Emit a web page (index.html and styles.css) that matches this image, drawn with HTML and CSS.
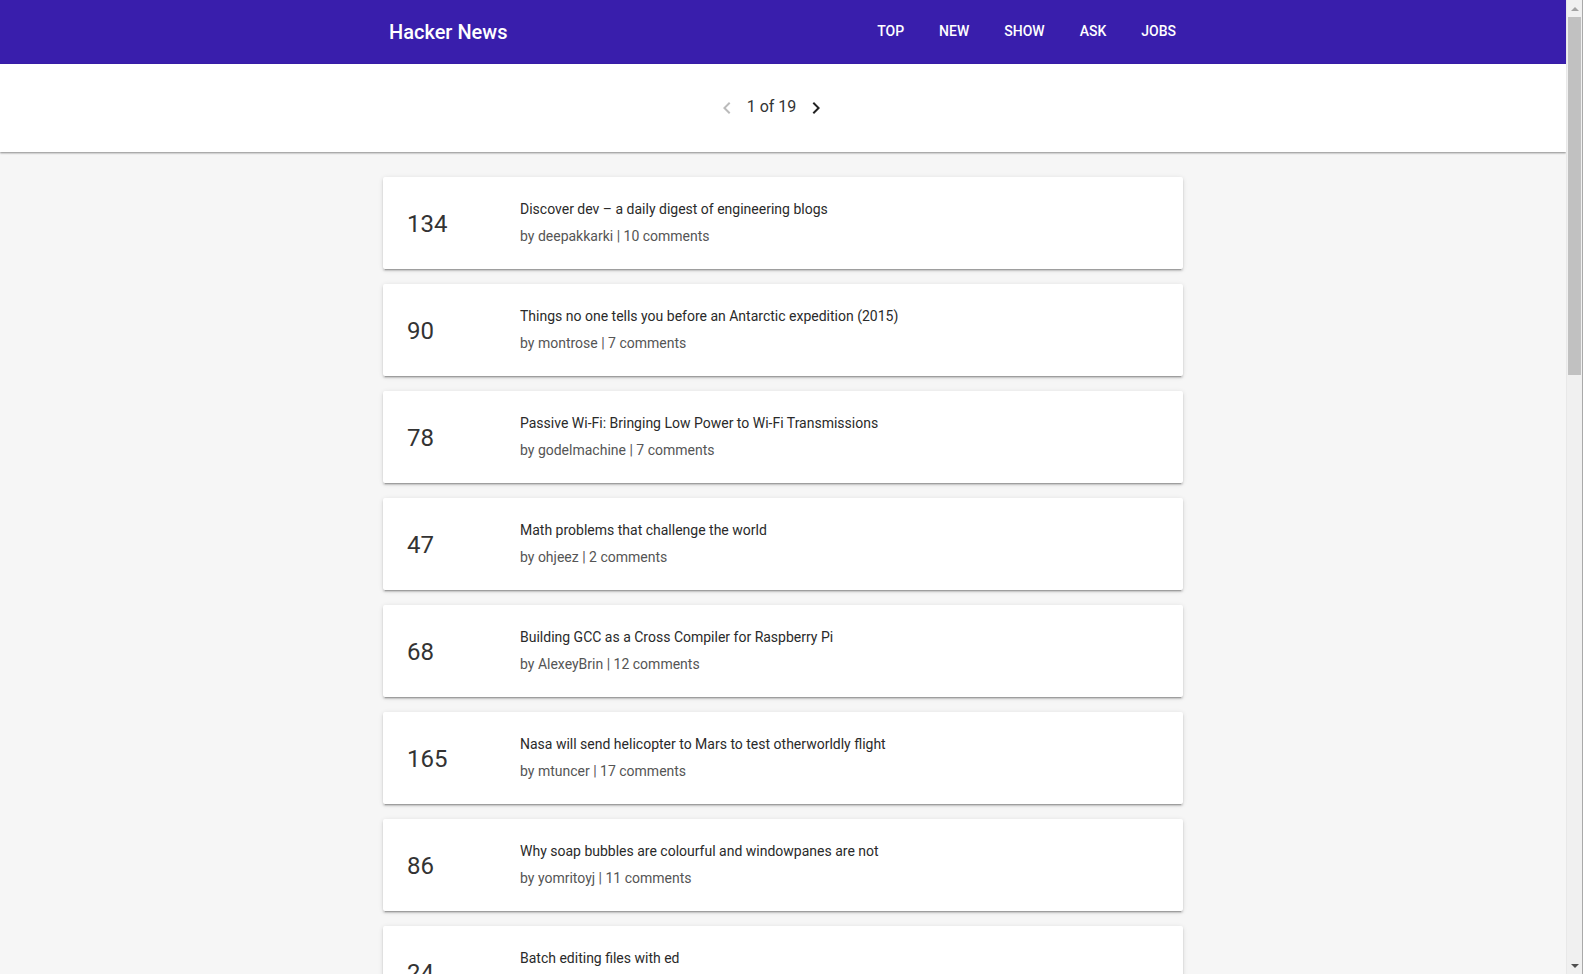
FILE: index.html
```html
<!DOCTYPE html>
<html lang="en">
<head>
<meta charset="utf-8">
<title>Hacker News</title>
<link rel="stylesheet" href="styles.css">
</head>
<body>
<header class="topbar">
  <div class="container topbar-inner">
    <a class="brand" href="#">Hacker News</a>
    <nav class="nav">
      <a href="#">Top</a>
      <a href="#">New</a>
      <a href="#">Show</a>
      <a href="#">Ask</a>
      <a href="#">Jobs</a>
    </nav>
  </div>
</header>
<div class="pager">
  <div class="pager-inner">
    <span class="pager-btn disabled"><svg viewBox="0 0 24 24" width="24" height="24"><path d="M15.41 7.41L14 6l-6 6 6 6 1.41-1.41L10.83 12z"/></svg></span>
    <span class="pager-text">1 of 19</span>
    <span class="pager-btn"><svg viewBox="0 0 24 24" width="24" height="24"><path d="M8.59 16.59L10 18l6-6-6-6-1.41 1.41L13.17 12z"/></svg></span>
  </div>
</div>
<main class="container list">
  <div class="card"><div class="score">134</div><div class="info"><div class="title">Discover dev – a daily digest of engineering blogs</div><div class="meta">by deepakkarki | 10 comments</div></div></div>
  <div class="card"><div class="score">90</div><div class="info"><div class="title">Things no one tells you before an Antarctic expedition (2015)</div><div class="meta">by montrose | 7 comments</div></div></div>
  <div class="card"><div class="score">78</div><div class="info"><div class="title">Passive Wi-Fi: Bringing Low Power to Wi-Fi Transmissions</div><div class="meta">by godelmachine | 7 comments</div></div></div>
  <div class="card"><div class="score">47</div><div class="info"><div class="title">Math problems that challenge the world</div><div class="meta">by ohjeez | 2 comments</div></div></div>
  <div class="card"><div class="score">68</div><div class="info"><div class="title">Building GCC as a Cross Compiler for Raspberry Pi</div><div class="meta">by AlexeyBrin | 12 comments</div></div></div>
  <div class="card"><div class="score">165</div><div class="info"><div class="title">Nasa will send helicopter to Mars to test otherworldly flight</div><div class="meta">by mtuncer | 17 comments</div></div></div>
  <div class="card"><div class="score">86</div><div class="info"><div class="title">Why soap bubbles are colourful and windowpanes are not</div><div class="meta">by yomritoyj | 11 comments</div></div></div>
  <div class="card"><div class="score">24</div><div class="info"><div class="title">Batch editing files with ed</div><div class="meta">by jolmg | 3 comments</div></div></div>
  <div class="card"><div class="score">112</div><div class="info"><div class="title">A look at the internals of a modern database engine</div><div class="meta">by ingve | 21 comments</div></div></div>
  <div class="card"><div class="score">57</div><div class="info"><div class="title">The history of the floppy disk</div><div class="meta">by pmoriarty | 9 comments</div></div></div>
  <div class="card"><div class="score">203</div><div class="info"><div class="title">Show HN: A tiny static site generator written in Go</div><div class="meta">by bbx | 34 comments</div></div></div>
  <div class="card"><div class="score">41</div><div class="info"><div class="title">How the brain keeps time</div><div class="meta">by dnetesn | 5 comments</div></div></div>
  <div class="card"><div class="score">96</div><div class="info"><div class="title">Understanding the Linux boot process</div><div class="meta">by kiyanwang | 14 comments</div></div></div>
  <div class="card"><div class="score">33</div><div class="info"><div class="title">Designing a better keyboard layout</div><div class="meta">by tosh | 8 comments</div></div></div>
  <div class="card"><div class="score">145</div><div class="info"><div class="title">What I learned building a search engine from scratch</div><div class="meta">by janvdberg | 26 comments</div></div></div>
  <div class="card"><div class="score">62</div><div class="info"><div class="title">The surprising physics of ice skating</div><div class="meta">by lelf | 6 comments</div></div></div>
  <div class="card"><div class="score">88</div><div class="info"><div class="title">An introduction to WebAssembly</div><div class="meta">by bpierre | 19 comments</div></div></div>
  <div class="card"><div class="score">29</div><div class="info"><div class="title">Ask HN: What are you reading this month?</div><div class="meta">by reader42 | 40 comments</div></div></div>
  <div class="card"><div class="score">74</div><div class="info"><div class="title">Rebuilding a 1970s minicomputer</div><div class="meta">by rbanffy | 12 comments</div></div></div>
  <div class="card"><div class="score">51</div><div class="info"><div class="title">Why functional programming matters (1990)</div><div class="meta">by tempodox | 10 comments</div></div></div>
  <div class="card"><div class="score">38</div><div class="info"><div class="title">The economics of open source maintenance</div><div class="meta">by mooreds | 4 comments</div></div></div>
  <div class="card"><div class="score">19</div><div class="info"><div class="title">A visual guide to hash tables</div><div class="meta">by signa11 | 1 comments</div></div></div>
</main>
<div class="scrollbar" aria-hidden="true">
  <div class="sb-btn"><span class="sb-up"></span></div>
  <div class="sb-track"><div class="sb-thumb"></div></div>
  <div class="sb-btn"><span class="sb-down"></span></div>
</div>
</body>
</html>
```
FILE: styles.css
```css
html {
  scrollbar-width: none;
}
html::-webkit-scrollbar {
  display: none;
}
html, body {
  margin: 0;
  padding: 0;
}
body {
  background: #f6f6f6;
  font-family: Roboto, "Noto Sans", "Liberation Sans", sans-serif;
  color: #333;
  padding-right: 17px;
}
a {
  color: inherit;
  text-decoration: none;
}
.container {
  width: 800px;
  margin: 0 auto;
  box-sizing: border-box;
}
.topbar {
  background: #391eac;
  height: 64px;
  color: #fff;
}
.topbar-inner {
  height: 64px;
  display: flex;
  align-items: center;
  justify-content: space-between;
  padding: 0 7px 0 6px;
}
.brand {
  font-size: 20px;
  font-weight: 500;
  margin-top: 0;
}
.nav {
  display: flex;
  gap: 35px;
  font-size: 14px;
  font-weight: 500;
  text-transform: uppercase;
  margin-top: -3px;
}
.pager {
  background: #fff;
  height: 88px;
  box-shadow: 0 1px 2px rgba(0,0,0,0.45);
  position: relative;
  display: flex;
  align-items: center;
  justify-content: center;
  padding-right: 23px;
}
.pager-inner {
  display: flex;
  align-items: center;
  gap: 8px;
  margin-top: 0;
}
.pager-btn {
  display: flex;
  width: 24px;
  height: 24px;
  fill: #222;
}
.pager-btn.disabled {
  fill: #bbb;
}
.pager-text {
  font-size: 16px;
  color: #333;
  margin-top: -3px;
}
.list {
  padding: 25px 0 30px;
  display: flex;
  flex-direction: column;
  gap: 15px;
}
.card {
  background: #fff;
  height: 92px;
  border-radius: 2px;
  box-shadow: 0 2px 2px 0 rgba(0,0,0,0.14), 0 3px 1px -2px rgba(0,0,0,0.2), 0 1px 5px 0 rgba(0,0,0,0.12);
  display: flex;
  align-items: center;
  padding: 0 24px;
}
.score {
  width: 113px;
  flex: none;
  font-size: 24px;
  color: #333;
  margin-top: 2px;
}
.info {
  display: flex;
  flex-direction: column;
  gap: 7px;
  margin-top: -2px;
}
.title {
  font-size: 14px;
  line-height: 20px;
  color: #2a2a2a;
}
.meta {
  font-size: 14px;
  line-height: 20px;
  color: #555;
}

/* imitation of the classic window scrollbar */
.scrollbar {
  position: fixed;
  top: 0;
  right: 0;
  bottom: 0;
  width: 17px;
  background: #f0f0f0;
  border-left: 1px solid #e8e8e8;
  box-sizing: border-box;
  display: flex;
  flex-direction: column;
}
.scrollbar::after {
  content: "";
  position: absolute;
  top: 0;
  bottom: 0;
  right: 0;
  width: 1px;
  background: #a9a9a9;
}
.sb-btn {
  height: 17px;
  flex: none;
  display: flex;
  align-items: center;
  justify-content: center;
}
.sb-up {
  width: 0;
  height: 0;
  border-left: 4px solid transparent;
  border-right: 4px solid transparent;
  border-bottom: 4px solid #a3a3a3;
}
.sb-down {
  width: 0;
  height: 0;
  border-left: 4px solid transparent;
  border-right: 4px solid transparent;
  border-top: 4px solid #505050;
}
.sb-track {
  flex: 1;
  padding: 0 2px 0 1px;
}
.sb-thumb {
  height: 358px;
  background: #c1c1c1;
}
```
